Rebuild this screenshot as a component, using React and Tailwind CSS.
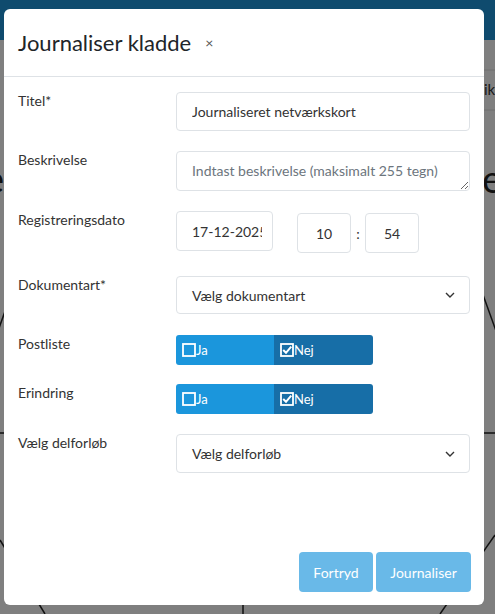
import React from 'react';

const BoxIcon = ({ checked }) => (
  <svg width="14" height="14" viewBox="0 0 14 14" className="shrink-0">
    <rect x="1" y="1" width="12" height="12" fill="none" stroke="white" strokeWidth="1.8" />
    {checked && <path d="M3.2 7 L6 9.8 L11.2 3.6" fill="none" stroke="white" strokeWidth="2" />}
  </svg>
);

const Chevron = () => (
  <svg width="10" height="6" viewBox="0 0 10 6" className="shrink-0">
    <path d="M1 1 L5 5 L9 1" fill="none" stroke="#333" strokeWidth="1.4" />
  </svg>
);

const YesNo = () => (
  <div className="flex h-[30px] w-[197px] overflow-hidden rounded-[3px] text-[13px] leading-none text-white">
    <div className="flex w-[98px] items-center bg-[#1b96dc] pl-[6px]">
      <BoxIcon />
      <span>Ja</span>
    </div>
    <div className="flex flex-1 items-center bg-[#176ea7] pl-[6px]">
      <BoxIcon checked />
      <span>Nej</span>
    </div>
  </div>
);

const Field = ({ label, children, className = '' }) => (
  <div className={`grid grid-cols-[158px_1fr] ${className}`}>
    <label className="text-[14px] leading-[18px] text-[#333]">{label}</label>
    <div>{children}</div>
  </div>
);

const SelectBox = ({ text, h }) => (
  <div className={`flex ${h} items-center justify-between rounded border border-[#dee2e6] pl-[15px] pr-[14px] text-[14px] text-[#333]`}>
    <span>{text}</span>
    <Chevron />
  </div>
);

const inputCls = 'rounded border border-[#dee2e6] bg-white text-[14px] text-[#333] outline-none';

const Backdrop = () => (
  <svg className="absolute inset-0" width="495" height="614" viewBox="0 0 495 614">
    <line x1="440" y1="70" x2="495" y2="70" stroke="#dcdcdc" strokeWidth="1" />
    <line x1="440" y1="110" x2="495" y2="110" stroke="#dcdcdc" strokeWidth="1" />
    <text x="484" y="95" fontSize="15" fill="#333" fontFamily="Lato, sans-serif">ik</text>
    <text x="482" y="193" fontSize="38" fill="#222" fontFamily="Lato, sans-serif">e</text>
    <text x="-16" y="193" fontSize="38" fill="#222" fontFamily="Lato, sans-serif">e</text>
    <line x1="-6" y1="342" x2="12" y2="292" stroke="#222" strokeWidth="1.5" />
    <line x1="482" y1="292" x2="500" y2="342" stroke="#222" strokeWidth="1.5" />
    <line x1="0" y1="433" x2="495" y2="433" stroke="#222" strokeWidth="1.5" />
    <line x1="0" y1="540" x2="45" y2="614" stroke="#222" strokeWidth="1.5" />
    <line x1="495" y1="535" x2="440" y2="614" stroke="#222" strokeWidth="1.5" />
    <line x1="243" y1="590" x2="243" y2="614" stroke="#222" strokeWidth="1.5" />
  </svg>
);

export default function App() {
  return (
    <div className="relative h-[614px] w-full overflow-hidden bg-white font-['Lato',sans-serif]">
      {/* underlying page */}
      <div className="h-10 bg-[#1e96dc]" />
      <Backdrop />
      <div className="absolute inset-0 bg-black/50" />

      {/* modal */}
      <div className="absolute left-1 top-[9px] flex h-[596px] w-[480px] flex-col rounded-md bg-white">
        <div className="flex h-[68px] shrink-0 items-center border-b border-[#dee2e6] px-[14px]">
          <h2 className="text-[22px] leading-none text-[#212529]">Journaliser kladde</h2>
          <button className="ml-[14px] mt-[1px] text-[14px] leading-none text-[#555]">×</button>
        </div>

        <div className="px-[14px] pt-[15px]">
          <Field label="Titel*" className="mb-5">
            <input
              readOnly
              value="Journaliseret netværkskort"
              className={`h-[39px] w-full px-[15px] ${inputCls}`}
            />
          </Field>

          <Field label="Beskrivelse" className="mb-5">
            <textarea
              placeholder="Indtast beskrivelse (maksimalt 255 tegn)"
              className={`block h-10 w-full px-[15px] pt-[9px] leading-5 placeholder:text-[#6c757d] ${inputCls}`}
            />
          </Field>

          <Field label="Registreringsdato" className="mb-[23px]">
            <div className="flex items-start">
              <input readOnly value="17-12-2025" className={`h-10 w-[97px] pl-[15px] pr-[10px] ${inputCls}`} />
              <input readOnly value="10" className={`ml-6 mt-[2px] h-10 w-[54px] text-center ${inputCls}`} />
              <span className="mt-[2px] flex h-10 w-[14px] items-center justify-center text-[14px] text-[#333]">:</span>
              <input readOnly value="54" className={`mt-[2px] h-10 w-[54px] text-center ${inputCls}`} />
            </div>
          </Field>

          <Field label="Dokumentart*" className="mb-[21px]">
            <SelectBox text="Vælg dokumentart" h="h-[38px]" />
          </Field>

          <Field label="Postliste" className="mb-[19px]">
            <YesNo />
          </Field>

          <Field label="Erindring" className="mb-5">
            <YesNo />
          </Field>

          <Field label="Vælg delforløb">
            <SelectBox text="Vælg delforløb" h="h-[39px]" />
          </Field>
        </div>

        <div className="mt-auto flex justify-end gap-[3px] px-[13px] pb-[13px]">
          <button className="h-10 w-[74px] rounded bg-[#69b9e8] text-[14px] text-white">Fortryd</button>
          <button className="h-10 w-[95px] rounded bg-[#69b9e8] text-[14px] text-white">Journaliser</button>
        </div>
      </div>
    </div>
  );
}
